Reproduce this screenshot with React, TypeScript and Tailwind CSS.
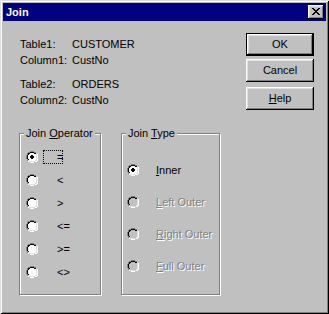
import type { ReactNode } from 'react'

const font = { fontFamily: '"Liberation Sans", Arial, sans-serif' }

const radioMap = [
  '....GGGG....',
  '..GGKKKKGG..',
  '.GKKiiiiKKL.',
  '.GKiiiiiiiLW',
  'GKiiiiiiiiLW',
  'GKiiiiiiiiLW',
  'GKiiiiiiiiLW',
  'GKiiiiiiiiLW',
  '.GKiiiiiiiLW',
  '.GLiiiiiiLLW',
  '..WLLLLLLWW.',
  '....WWWW....',
]

const dotMap = ['.XX.', 'XXXX', 'XXXX', '.XX.']

const closeMap = [
  'XX....XX',
  '.XX..XX.',
  '..XXXX..',
  '...XX...',
  '..XXXX..',
  '.XX..XX.',
  'XX....XX',
]

const Pixels = ({ rows, colors, dx = 0, dy = 0 }: { rows: string[]; colors: Record<string, string>; dx?: number; dy?: number }) => (
  <>
    {rows.flatMap((row, y) =>
      row.split('').map((c, x) =>
        colors[c] ? <rect key={`${x}-${y}`} x={x + dx} y={y + dy} width={1} height={1} fill={colors[c]} /> : null
      )
    )}
  </>
)

const Radio = ({ checked = false, disabled = false }: { checked?: boolean; disabled?: boolean }) => (
  <svg width={12} height={12} viewBox="0 0 12 12" shapeRendering="crispEdges" className="shrink-0">
    <Pixels
      rows={radioMap}
      colors={{ G: '#808080', K: '#000000', W: '#ffffff', L: '#dfdfdf', i: disabled ? '#c0c0c0' : '#ffffff' }}
    />
    {checked && <Pixels rows={dotMap} colors={{ X: '#000000' }} dx={4} dy={4} />}
  </svg>
)

const bevel = 'shadow-[inset_-1px_-1px_#000,inset_1px_1px_#fff,inset_-2px_-2px_#808080,inset_2px_2px_#dfdfdf]'

const Button = ({ children, isDefault = false, className = '' }: { children: ReactNode; isDefault?: boolean; className?: string }) => (
  <div className={`w-[68px] h-[23px] ${isDefault ? 'border border-black' : ''} ${className}`}>
    <div className={`w-full h-full flex items-center justify-center text-[11px] text-black ${bevel}`}>{children}</div>
  </div>
)

const GroupBox = ({ label, width, children }: { label: ReactNode; width: string; children: ReactNode }) => (
  <div className={`relative h-[162px] border border-[#808080] shadow-[inset_1px_1px_#fff,1px_1px_#fff] ${width}`}>
    <span className="absolute top-[-8px] left-[4px] px-[2px] bg-[#c0c0c0] text-[11px] leading-[14px] text-black">
      {label}
    </span>
    {children}
  </div>
)

const operators = ['=', '<', '>', '<=', '>=', '<>']

const joinTypes: { key: string; first: string; rest: string; enabled: boolean }[] = [
  { key: 'inner', first: 'I', rest: 'nner', enabled: true },
  { key: 'left', first: 'L', rest: 'eft Outer', enabled: false },
  { key: 'right', first: 'R', rest: 'ight Outer', enabled: false },
  { key: 'full', first: 'F', rest: 'ull Outer', enabled: false },
]

const App = () => {
  return (
    <div
      style={font}
      className="w-[329px] h-[314px] p-[3px] bg-[#c0c0c0] shadow-[inset_1px_1px_#dfdfdf,inset_-1px_-1px_#000,inset_2px_2px_#fff,inset_-2px_-2px_#808080] overflow-hidden"
    >
      {/* title bar */}
      <div className="h-[18px] bg-[#000080] flex items-center justify-between pl-[3px] pr-[2px]">
        <span className="text-white font-bold text-[11px] leading-[14px]">Join</span>
        <div className={`w-[16px] h-[14px] bg-[#c0c0c0] flex items-center justify-center ${bevel}`}>
          <svg width={8} height={7} viewBox="0 0 8 7" shapeRendering="crispEdges" className="mt-[-1px] mr-[1px]">
            <Pixels rows={closeMap} colors={{ X: '#000000' }} />
          </svg>
        </div>
      </div>

      <div className="flex pl-[16px]">
        {/* left side */}
        <div className="w-[227px] pt-[15px]">
          <div className="pl-[1px] text-[11px] leading-[16px] text-black">
            <div className="flex"><span className="w-[52px]">Table1:</span><span>CUSTOMER</span></div>
            <div className="flex"><span className="w-[52px]">Column1:</span><span>CustNo</span></div>
            <div className="flex mt-[8px]"><span className="w-[52px]">Table2:</span><span>ORDERS</span></div>
            <div className="flex"><span className="w-[52px]">Column2:</span><span>CustNo</span></div>
          </div>

          <div className="flex mt-[25px]">
            <GroupBox width="w-[82px]" label={<>Join <u>O</u>perator</>}>
              <div className="pt-[11px] pl-[6px]">
                {operators.map((op, i) => (
                  <div key={op} className="h-[23px] flex items-center">
                    <Radio checked={i === 0} />
                    <span
                      className={`ml-[5px] w-[20px] h-[14px] pl-[13px] border text-[11px] leading-[12px] text-black whitespace-pre ${
                        i === 0 ? 'border-dotted border-black' : 'border-transparent'
                      }`}
                    >
                      {op}
                    </span>
                  </div>
                ))}
              </div>
            </GroupBox>

            <div className="ml-[20px]">
              <GroupBox width="w-[99px]" label={<>Join <u>T</u>ype</>}>
                <div className="pt-[20px] pl-[5px]">
                  {joinTypes.map((t, i) => (
                    <div key={t.key} className="h-[32px] flex items-center">
                      <Radio checked={i === 0} disabled={!t.enabled} />
                      <span
                        className={`ml-[17px] text-[11px] leading-[14px] ${
                          t.enabled ? 'text-black' : 'text-[#808080] [text-shadow:1px_1px_0_#fff]'
                        }`}
                      >
                        <u>{t.first}</u>
                        {t.rest}
                      </span>
                    </div>
                  ))}
                </div>
              </GroupBox>
            </div>
          </div>
        </div>

        {/* buttons */}
        <div className="pt-[12px] flex flex-col">
          <Button isDefault>OK</Button>
          <Button className="mt-[3px]">Cancel</Button>
          <Button className="mt-[5px]">
            <span><u>H</u>elp</span>
          </Button>
        </div>
      </div>
    </div>
  )
}

export default App
